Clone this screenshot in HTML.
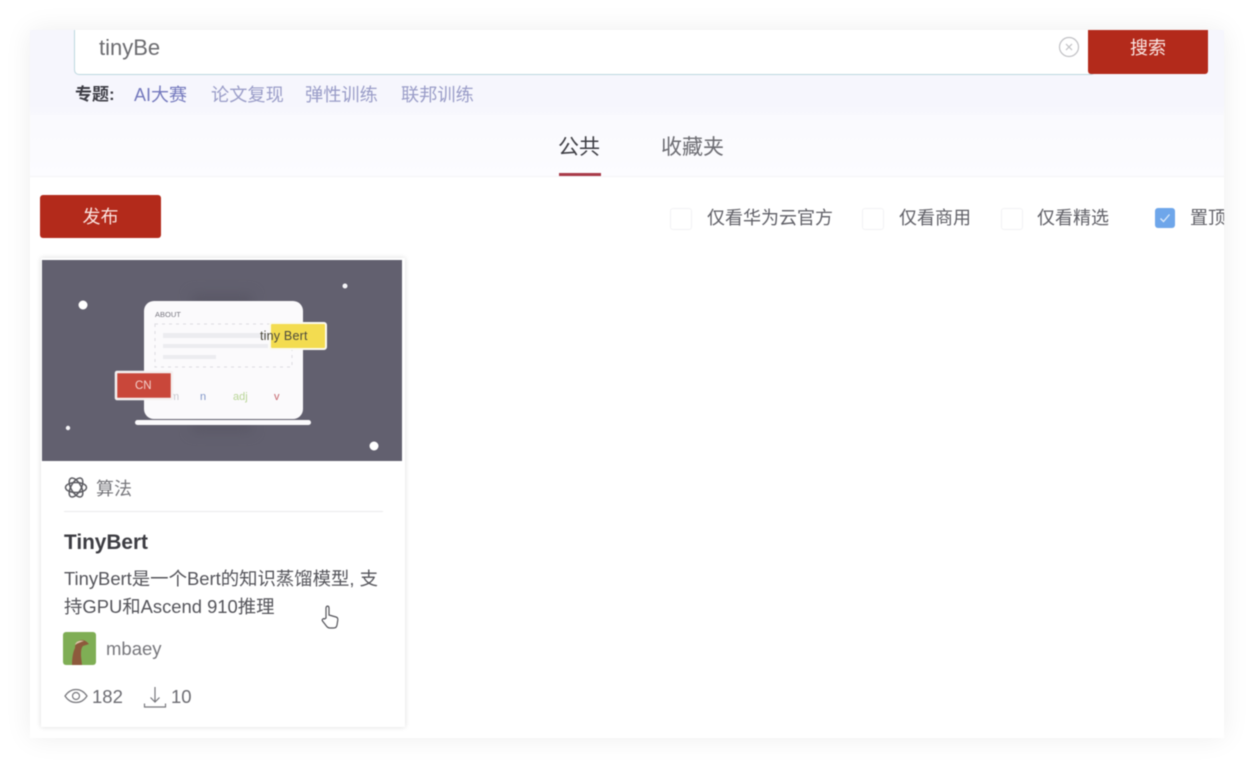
<!DOCTYPE html>
<html lang="zh-CN">
<head>
<meta charset="utf-8">
<title>TinyBert</title>
<style>
html,body{margin:0;padding:0;background:#fff;}
body{width:1255px;height:768px;overflow:hidden;position:relative;font-family:"Liberation Sans","Noto Sans CJK SC",sans-serif;}
#win{position:absolute;left:30px;top:30px;width:1194px;height:708px;background:#fff;overflow:hidden;box-shadow:0 0 26px rgba(0,0,0,.07);filter:blur(.6px);}
#win *{position:absolute;white-space:nowrap;}
.hdr{left:0;top:0;width:1194px;height:85px;background:linear-gradient(#f6f6fd 85%,#f8f8fd);}
.hdr2{left:0;top:85px;width:1194px;height:61px;background:linear-gradient(#fafafe,#fcfcff);border-bottom:1px solid #f3f3f6;}
.input{left:44px;top:-10px;width:1020px;height:53px;background:#fff;border:1px solid #bdd7df;border-radius:5px;}
.tag{top:54px;font-size:18.2px;line-height:22px;color:#9a9dc8;}
.cb{width:20px;height:20px;top:178px;border:1px solid #f2f2f4;border-radius:3px;background:#fff;}
.cbl{top:176px;font-size:18px;line-height:24px;color:#606067;}
</style>
</head>
<body>
<div id="win">
  <div class="hdr"></div>
  <div class="hdr2"></div>
  <div class="input"></div>
  <div style="left:69px;top:5px;font-size:22px;line-height:26px;color:#6c6c70;">tinyBe</div>
  <svg style="left:1028px;top:6px;" width="22" height="22" viewBox="0 0 22 22" fill="none" stroke="#c0c0c4" stroke-width="1.2"><circle cx="11" cy="11" r="9.500"/><path d="M8 8l6 6M14 8l-6 6"/></svg>
  <div style="left:1058px;top:0;width:120px;height:44px;background:#b32a1b;border-radius:0 0 3px 3px;color:#fbe9e6;font-size:18px;line-height:37px;text-align:center;">搜索</div>
  <div style="left:45px;top:54px;font-size:17px;line-height:22px;font-weight:700;color:#3c3c44;">专题:</div>
  <div class="tag" style="left:104px;color:#7479bd;font-size:18px;">AI大赛</div>
  <div class="tag" style="left:181px;">论文复现</div>
  <div class="tag" style="left:275px;">弹性训练</div>
  <div class="tag" style="left:371px;">联邦训练</div>

  <div style="left:528px;top:104px;font-size:21px;line-height:27px;color:#3e3e44;">公共</div>
  <div style="left:529px;top:143px;width:42px;height:3px;background:#a83a48;"></div>
  <div style="left:631px;top:104px;font-size:21px;line-height:27px;color:#6c6c72;">收藏夹</div>

  <div style="left:10px;top:165px;width:121px;height:43px;background:#b32a1b;border-radius:3px;color:#fbe4e0;font-size:18px;line-height:45px;text-align:center;">发布</div>

  <div class="cb" style="left:640px;"></div><div class="cbl" style="left:677px;">仅看华为云官方</div>
  <div class="cb" style="left:832px;"></div><div class="cbl" style="left:869px;">仅看商用</div>
  <div class="cb" style="left:971px;"></div><div class="cbl" style="left:1007px;">仅看精选</div>
  <div style="left:1125px;top:178px;width:20px;height:20px;background:#6ea6ea;border-radius:3px;"></div>
  <svg style="left:1125px;top:178px;" width="20" height="20" viewBox="0 0 20 20" fill="none" stroke="#dcebfb" stroke-width="1.3"><path d="M5.500 10.500l3 3 6-7"/></svg>
  <div class="cbl" style="left:1160px;">置顶</div>

  <!-- card -->
  <div style="left:11px;top:228px;width:364px;height:469px;background:#fff;box-shadow:0 0 5px rgba(0,0,0,.14);"></div>
  <svg style="left:12px;top:230px;" width="360" height="201" viewBox="0 0 360 201">
    <rect width="360" height="201" fill="#62606f"/>
    <rect x="150" y="34" width="60" height="18" style="filter:blur(6px)" fill="#5a5866"/>
    <rect x="150" y="160" width="60" height="12" style="filter:blur(6px)" fill="#5a5866"/>
    <rect x="102" y="41" width="159" height="118" rx="10" fill="#fbfafc"/>
    <text x="113" y="57" font-family="Liberation Sans" font-size="7.500" fill="#77767f">ABOUT</text>
    <rect x="113" y="64" width="137" height="43" fill="none" stroke="#dcdce0" stroke-dasharray="3 4"/>
    <rect x="121" y="73" width="105" height="5" fill="#ececf0"/>
    <rect x="121" y="84" width="105" height="4" fill="#ececf0"/>
    <rect x="121" y="95" width="53" height="4" fill="#ececf0"/>
    <rect x="93" y="160" width="176" height="5" rx="2.500" fill="#fbfafc"/>
    <rect x="228" y="63" width="56" height="26" rx="2" fill="#f3dc50" stroke="#fbfaf0" stroke-width="2"/>
    <text x="218" y="80" font-family="Liberation Sans" font-size="12.500" fill="#4c4a3c" letter-spacing=".2">tiny Bert</text>
    <text x="128" y="140" font-family="Liberation Sans" font-size="11" fill="#c9c9d0">m</text>
    <rect x="74" y="112" width="56" height="27" rx="1" fill="#c9473a" stroke="#f5f1f1" stroke-width="2.500"/>
    <text x="93" y="129" font-family="Liberation Sans" font-size="11.500" fill="#f3cfca">CN</text>
    <text x="158" y="140" font-family="Liberation Sans" font-size="11" fill="#7f95c8">n</text>
    <text x="191" y="140" font-family="Liberation Sans" font-size="11" fill="#b8d596">adj</text>
    <text x="232" y="140" font-family="Liberation Sans" font-size="11" fill="#c4656c">v</text>
    <circle cx="41" cy="45" r="4.500" fill="#fff"/>
    <circle cx="303" cy="26" r="2.500" fill="#f5f5f8"/>
    <circle cx="26" cy="168" r="2.200" fill="#f5f5f8"/>
    <circle cx="332" cy="186" r="4.500" fill="#fff"/>
  </svg>
  <svg style="left:34px;top:446px;" width="24" height="23" viewBox="0 0 24 23" fill="none" stroke="#5c5c62" stroke-width="1.500"><ellipse cx="12" cy="11.500" rx="10.500" ry="5"/><ellipse cx="12" cy="11.500" rx="10.500" ry="5" transform="rotate(60 12 11.500)"/><ellipse cx="12" cy="11.500" rx="10.500" ry="5" transform="rotate(120 12 11.500)"/></svg>
  <div style="left:66px;top:447px;font-size:18px;line-height:24px;color:#77777c;">算法</div>
  <div style="left:34px;top:481px;width:319px;height:1px;background:#ebebed;"></div>
  <div style="left:34px;top:499px;font-size:20.800px;line-height:28px;font-weight:700;color:#3c3c42;">TinyBert</div>
  <div style="left:34px;top:535px;font-size:18.400px;line-height:28px;color:#55555b;">TinyBert是一个Bert的知识蒸馏模型, 支<br>持GPU和Ascend 910推理</div>
  <svg style="left:33px;top:602px;" width="33" height="33" viewBox="0 0 33 33"><rect width="33" height="33" rx="3" fill="#7fae55"/><path d="M9 33c0-7 1-13 3-17 0-5 3-8 7-8 3 0 5 2 7 4l-6 2c-2 2-2 6-2 10l1 9z" fill="#8d5a3c"/><path d="M12 13c1-4 5-5 9-4-3 1-6 2-9 4z" fill="#d9c7a9"/></svg>
  <div style="left:76px;top:607px;font-size:18.500px;line-height:24px;color:#77777c;">mbaey</div>
  <svg style="left:34px;top:656px;" width="24" height="20" viewBox="0 0 24 20" fill="none" stroke="#77777c" stroke-width="1.200"><path d="M1 10c3-4.500 7-6.500 11-6.500s8 2 11 6.500c-3 4.500-7 6.500-11 6.500S4 14.500 1 10z"/><circle cx="12" cy="10" r="3.500"/></svg>
  <div style="left:62px;top:655px;font-size:18.500px;line-height:24px;color:#6c6c72;">182</div>
  <svg style="left:113px;top:656px;" width="24" height="24" viewBox="0 0 24 24" fill="none" stroke="#77777c" stroke-width="1.200"><path d="M12 1v15M7.500 11.500l4.500 4.500 4.500-4.500M1.500 17.500v3.500h21v-3.500"/></svg>
  <div style="left:141px;top:655px;font-size:18.500px;line-height:24px;color:#6c6c72;">10</div>
  <svg style="left:290px;top:574px;" width="20" height="26" viewBox="0 0 20 26" fill="#fff" stroke="#55555b" stroke-width="1.200"><path d="M6 14V4c0-2.500 3-2.500 3 0v7l7 2c1.500.5 2 1.500 1.800 3l-.8 5c-.3 2-1.500 3-3.500 3H10c-2 0-3-1-4-2.500L2.500 17c-1-1.500 1-3 2-2z"/></svg>
</div>
</body>
</html>
